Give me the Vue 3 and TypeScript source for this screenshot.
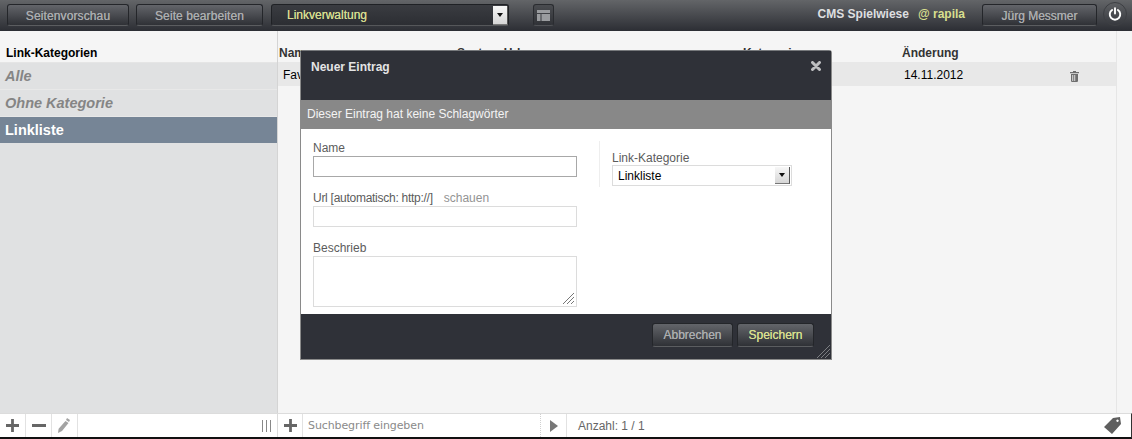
<script setup lang="ts">
const categories = [
  { name: 'Alle', kind: 'muted' },
  { name: 'Ohne Kategorie', kind: 'muted' },
  { name: 'Linkliste', kind: 'active' },
]
</script>

<template>
  <div class="page">
    <header class="topbar">
      <button class="btn btn-preview">Seitenvorschau</button>
      <button class="btn btn-edit">Seite bearbeiten</button>
      <div class="module-select">
        <span>Linkverwaltung</span>
        <i class="arrow-box"><b></b></i>
      </div>
      <button class="btn btn-icon" aria-label="Layout">
        <svg width="13" height="11" viewBox="0 0 13 11"><path d="M0 0h13v3H0zM0 4h3.500v7H0zM4.500 4H13v7H4.500z" fill="#9a9c9f" /></svg>
      </button>
      <div class="top-right">
        <span class="site">CMS Spielwiese</span>
        <span class="brand">@ rapila</span>
        <button class="btn btn-user">Jürg Messmer</button>
        <span class="power">
          <svg width="14" height="14" viewBox="0 0 16 16" fill="none" stroke="#fff" stroke-width="2.200" stroke-linecap="round"><path d="M8 1.500v6" /><path d="M4.700 3.500a6 6 0 1 0 6.600 0" /></svg>
        </span>
      </div>
    </header>

    <div class="content">
      <aside class="sidebar">
        <h2 class="side-title">Link-Kategorien</h2>
        <ul class="side-list">
          <li v-for="c in categories" :key="c.name" :class="c.kind">{{ c.name }}</li>
        </ul>
      </aside>
      <main class="table-area">
        <div class="table-grid table-head">
          <span>Name</span><span>System-Url</span><span>Kategorie</span><span>Änderung</span>
        </div>
        <div class="table-grid table-row">
          <span class="cell-name">Favoriten</span><span></span><span></span><span class="cell-date">14.11.2012</span>
          <svg class="trash" width="9" height="11" viewBox="0 0 9 11"><path d="M3 0h3v1h3v1.300H0V1h3zM1 3h7v7.200l-.8.800H1.800L1 10.200zm1.300 1v6h.9V4zm2 0v6h.9V4z" fill="#6e6e6e" fill-rule="evenodd" /></svg>
        </div>
      </main>
      <div class="scroll-track"></div>
    </div>

    <footer class="footer">
      <div class="foot-left">
        <span class="tool">
          <svg width="13" height="13" viewBox="0 0 14 14"><path d="M5.500 0h3v5.500H14v3H8.500V14h-3V8.500H0v-3h5.500z" fill="#666" /></svg>
        </span>
        <span class="tool">
          <svg width="14" height="3" viewBox="0 0 14 3"><path d="M0 0h14v3H0z" fill="#666" /></svg>
        </span>
        <span class="tool tool-pencil">
          <svg width="13" height="15" viewBox="0 0 13 15"><path d="M10 0l3 2-1 2-3-2zM8.500 3l3 2-6.500 8-4 2 .6-4.300z" fill="#a3a3a3" /></svg>
        </span>
        <span class="grip"><i></i><i></i><i></i></span>
      </div>
      <span class="tool tool-add">
        <svg width="13" height="13" viewBox="0 0 14 14"><path d="M5.500 0h3v5.500H14v3H8.500V14h-3V8.500H0v-3h5.500z" fill="#666" /></svg>
      </span>
      <span class="search">Suchbegriff eingeben</span>
      <span class="play"><svg width="8" height="12" viewBox="0 0 8 12"><path d="M0 0l8 6-8 6z" fill="#777" /></svg></span>
      <span class="count">Anzahl: 1 / 1</span>
      <svg class="tag" width="17" height="17" viewBox="0 0 17 17"><path fill-rule="evenodd" d="M9 1l7-1 1 7-9 10-8-7zm4.500 1.500a1.200 1.200 0 1 0 .01 0z" fill="#5f5f5f" /></svg>
    </footer>

    <section class="modal">
      <div class="modal-head">
        <h1>Neuer Eintrag</h1>
        <svg class="close" width="10" height="10" viewBox="0 0 10 10"><path d="M1.500 1.500l7 7M8.500 1.500l-7 7" stroke="#bdbec0" stroke-width="3" stroke-linecap="round" /></svg>
      </div>
      <div class="modal-band">Dieser Eintrag hat keine Schlagwörter</div>
      <div class="modal-body">
        <div class="col-left">
          <label class="f-label">Name</label>
          <div class="input focus"></div>
          <label class="f-label"><span class="tight">Url [automatisch: http://]</span><em>schauen</em></label>
          <div class="input"></div>
          <label class="f-label">Beschrieb</label>
          <div class="input area">
            <svg class="grabber" width="11" height="11" viewBox="0 0 11 11" stroke="#777" stroke-width="1"><path d="M0 11L11 0M4 11l7-7M8 11l3-3" /></svg>
          </div>
        </div>
        <div class="col-right">
          <label class="f-label">Link-Kategorie</label>
          <div class="select">
            <span>Linkliste</span>
            <i class="arrow-box small"><b></b></i>
          </div>
        </div>
      </div>
      <div class="modal-foot">
        <button class="btn btn-cancel">Abbrechen</button>
        <button class="btn btn-save">Speichern</button>
        <svg class="grabber-dark" width="13" height="13" viewBox="0 0 13 13" stroke="#7c7e82" stroke-width="1"><path d="M0 13L13 0M4 13l9-9M8 13l5-5" /></svg>
      </div>
    </section>
  </div>
</template>

<style>
html, body { margin: 0; padding: 0; background: #f5f5f5; overflow: hidden; }
</style>

<style scoped>
.page {
  position: relative;
  display: flex;
  flex-direction: column;
  width: 1132px;
  height: 439px;
  overflow: hidden;
  font-family: "Liberation Sans", Arial, sans-serif;
  font-size: 12px;
  color: #000;
  background: #f5f5f5;
}
.topbar {
  display: flex;
  align-items: flex-start;
  flex: none;
  box-sizing: border-box;
  height: 31px;
  padding: 4px 0 0 7px;
  background: linear-gradient(#636568, #2c2e34);
}
.btn {
  display: block;
  box-sizing: border-box;
  height: 22px;
  padding: 0;
  border: 1px solid #24262a;
  border-bottom-color: #5b5d60;
  border-radius: 3px;
  background: linear-gradient(#63656a, #2f3136);
  color: #aaacae;
  font-family: inherit;
  font-size: 12px;
  line-height: 22px;
  text-align: center;
  text-shadow: 0 0 0.6px currentColor;
}
.btn-preview { width: 122px; margin-right: 7px; letter-spacing: 0.12px; }
.btn-edit { width: 127px; margin-right: 8px; letter-spacing: 0.1px; }
.btn-icon {
  display: flex;
  align-items: center;
  justify-content: center;
  width: 21px;
  margin-left: 24px;
  background: linear-gradient(#4a4c50, #303237);
  border-color: #2a2c30;
  border-bottom-color: #505256;
}
.module-select {
  display: flex;
  align-items: flex-start;
  justify-content: space-between;
  box-sizing: border-box;
  width: 238px;
  height: 22px;
  padding: 0 0 0 15px;
  border: 1px solid #1f2125;
  border-bottom-color: #55575a;
  border-radius: 3px;
  background: linear-gradient(#3a3c41, #2c2e33);
  color: #d5dc8e;
  line-height: 20px;
  text-shadow: 0 0 0.6px currentColor;
}
.arrow-box {
  display: flex;
  align-items: center;
  justify-content: center;
  flex: none;
  box-sizing: border-box;
  width: 15px;
  height: 19px;
  margin-top: 1px;
  background: linear-gradient(#f7f7f7, #d6d6d6);
  border-right: 1px solid #555;
  border-bottom: 1px solid #777;
}
.arrow-box b {
  width: 0;
  height: 0;
  border: 3px solid transparent;
  border-top: 4px solid #111;
  border-bottom: 0;
}
.top-right {
  display: flex;
  align-items: flex-start;
  margin-left: auto;
  line-height: 20px;
}
.site { margin-right: 9px; font-weight: 700; color: #dedfe0; }
.brand { margin-right: 17px; font-weight: 700; color: #d8df8e; }
.btn-user { width: 115px; margin-right: 6px; }
.power {
  display: flex;
  align-items: center;
  justify-content: center;
  width: 24px;
  height: 24px;
  margin: -2px 5px 0 0;
  border: 1px solid #3d3f43;
  box-sizing: border-box;
  border-radius: 50%;
}
.content {
  display: flex;
  flex: 1;
  min-height: 0;
}
.sidebar {
  flex: none;
  box-sizing: border-box;
  width: 278px;
  background: #e0e1e2;
  border-right: 1px solid #d4d4d4;
}
.side-title {
  box-sizing: border-box;
  height: 32px;
  margin: 0;
  padding: 15px 0 0 6px;
  background: #f5f5f5;
  font-size: 12px;
  font-weight: 700;
  line-height: 14px;
  border-bottom: 1px solid #e5e5e5;
}
.side-list {
  margin: 0;
  padding: 0;
  list-style: none;
}
.side-list li {
  box-sizing: border-box;
  height: 27px;
  padding-left: 5px;
  font-size: 14.5px;
  font-weight: 700;
  line-height: 27px;
  border-bottom: 1px solid #e8e8e8;
}
.side-list .muted { color: #858585; font-style: italic; }
.side-list .active { color: #fff; background: #768596; border-bottom: 0; height: 26px; }
.table-area { flex: 1; min-width: 0; }
.table-grid {
  display: grid;
  grid-template-columns: 178px 286px 159px 1fr;
}
.table-head {
  box-sizing: border-box;
  height: 31px;
  padding: 15px 0 0 1px;
  font-weight: 700;
  line-height: 14px;
  color: #333;
}
.table-row {
  position: relative;
  height: 24px;
  padding-left: 1px;
  background: #e8e8e8;
  line-height: 26px;
}
.cell-name { padding-left: 4px; }
.cell-date { padding-left: 2px; }
.trash { position: absolute; left: 792px; top: 9px; }
.scroll-track {
  flex: none;
  box-sizing: border-box;
  width: 16px;
  background: #f5f5f5;
  border-left: 1px solid #e6e6e6;
}
.footer {
  display: flex;
  align-items: center;
  flex: none;
  box-sizing: border-box;
  height: 26px;
  background: #fff;
  border-top: 1px solid #dcdcdc;
  border-bottom: 2px solid #111;
  border-right: 1px solid #333;
}
.foot-left {
  display: flex;
  align-items: center;
  align-self: stretch;
  box-sizing: border-box;
  width: 278px;
  border-right: 1px solid #dcdcdc;
}
.tool {
  display: flex;
  align-items: center;
  justify-content: center;
  align-self: stretch;
  box-sizing: border-box;
  width: 26px;
  border-right: 1px solid #e2e2e2;
}
.tool-pencil svg { margin-right: 2px; }
.tool-add { width: 25px; }
.grip {
  display: flex;
  gap: 3px;
  margin-left: auto;
  margin-right: 6px;
}
.grip i {
  display: block;
  width: 1px;
  height: 12px;
  background: #888;
}
.search {
  box-sizing: border-box;
  width: 238px;
  height: 100%;
  padding-left: 5px;
  font-family: "DejaVu Sans", sans-serif;
  font-size: 11px;
  letter-spacing: -0.1px;
  line-height: 23px;
  color: #8a8a8a;
  border-right: 1px dotted #d0d0d0;
}
.play {
  display: flex;
  align-items: center;
  justify-content: center;
  align-self: stretch;
  box-sizing: border-box;
  width: 26px;
  border-right: 1px solid #e2e2e2;
}
.count {
  padding-left: 11px;
  color: #666;
}
.tag { margin-left: auto; margin-right: 10px; }
.modal {
  position: absolute;
  left: 300px;
  top: 50px;
  box-sizing: border-box;
  display: flex;
  flex-direction: column;
  width: 532px;
  height: 310px;
  border: 1px solid #8a8a8a;
  border-top-color: #77797c;
  border-radius: 3px 3px 0 0;
  background: #fff;
}
.modal-head {
  position: relative;
  box-sizing: border-box;
  flex: none;
  height: 49px;
  padding: 9px 0 0 10px;
  background: #2f3138;
}
.modal-head h1 {
  margin: 0;
  color: #e4e4e4;
  font-size: 12px;
  font-weight: 700;
  line-height: 14px;
}
.close { position: absolute; right: 10px; top: 10px; }
.modal-band {
  flex: none;
  box-sizing: border-box;
  height: 29px;
  padding-left: 6px;
  background: #888;
  color: #f4f4f4;
  line-height: 28px;
}
.modal-body {
  display: flex;
  flex: 1;
  min-height: 0;
  background: #fff;
}
.col-left {
  flex: none;
  box-sizing: border-box;
  width: 298px;
  padding: 11px 0 0 12px;
  color: #555;
}
.f-label {
  display: block;
  height: 15px;
  margin-bottom: 1px;
  line-height: 16px;
  color: #5c5c5c;
}
.tight { letter-spacing: -0.27px; }
.f-label em {
  margin-left: 11px;
  font-style: normal;
  color: #939393;
}
.input {
  position: relative;
  box-sizing: border-box;
  width: 264px;
  height: 21px;
  margin: 0 0 13px;
  border: 1px solid #dcdcdc;
}
.input.focus { border-color: #a8a8a8; }
.input.area { height: 51px; margin: 0; }
.grabber { position: absolute; right: 2px; bottom: 2px; }
.col-right {
  flex: none;
  align-self: flex-start;
  box-sizing: border-box;
  height: 46px;
  margin-top: 12px;
  padding: 9px 0 0 12px;
  border-left: 1px solid #eee;
}
.col-right .f-label { margin-bottom: 0; }
.select {
  display: flex;
  align-items: flex-start;
  justify-content: space-between;
  box-sizing: border-box;
  width: 180px;
  height: 21px;
  padding-left: 5px;
  border: 1px solid #dcdcdc;
  line-height: 20px;
  color: #000;
}
.arrow-box.small { height: 17px; margin: 1px 1px 0 0; }
.modal-foot {
  position: relative;
  display: flex;
  align-items: flex-start;
  justify-content: flex-end;
  flex: none;
  box-sizing: border-box;
  height: 45px;
  padding: 9px 17px 0 0;
  background: #2f3138;
}
.btn-cancel { width: 81px; height: 24px; margin-right: 4px; line-height: 22px; }
.btn-save { width: 77px; height: 24px; color: #d8df8e; line-height: 22px; }
.grabber-dark { position: absolute; right: 1px; bottom: 1px; }
</style>
